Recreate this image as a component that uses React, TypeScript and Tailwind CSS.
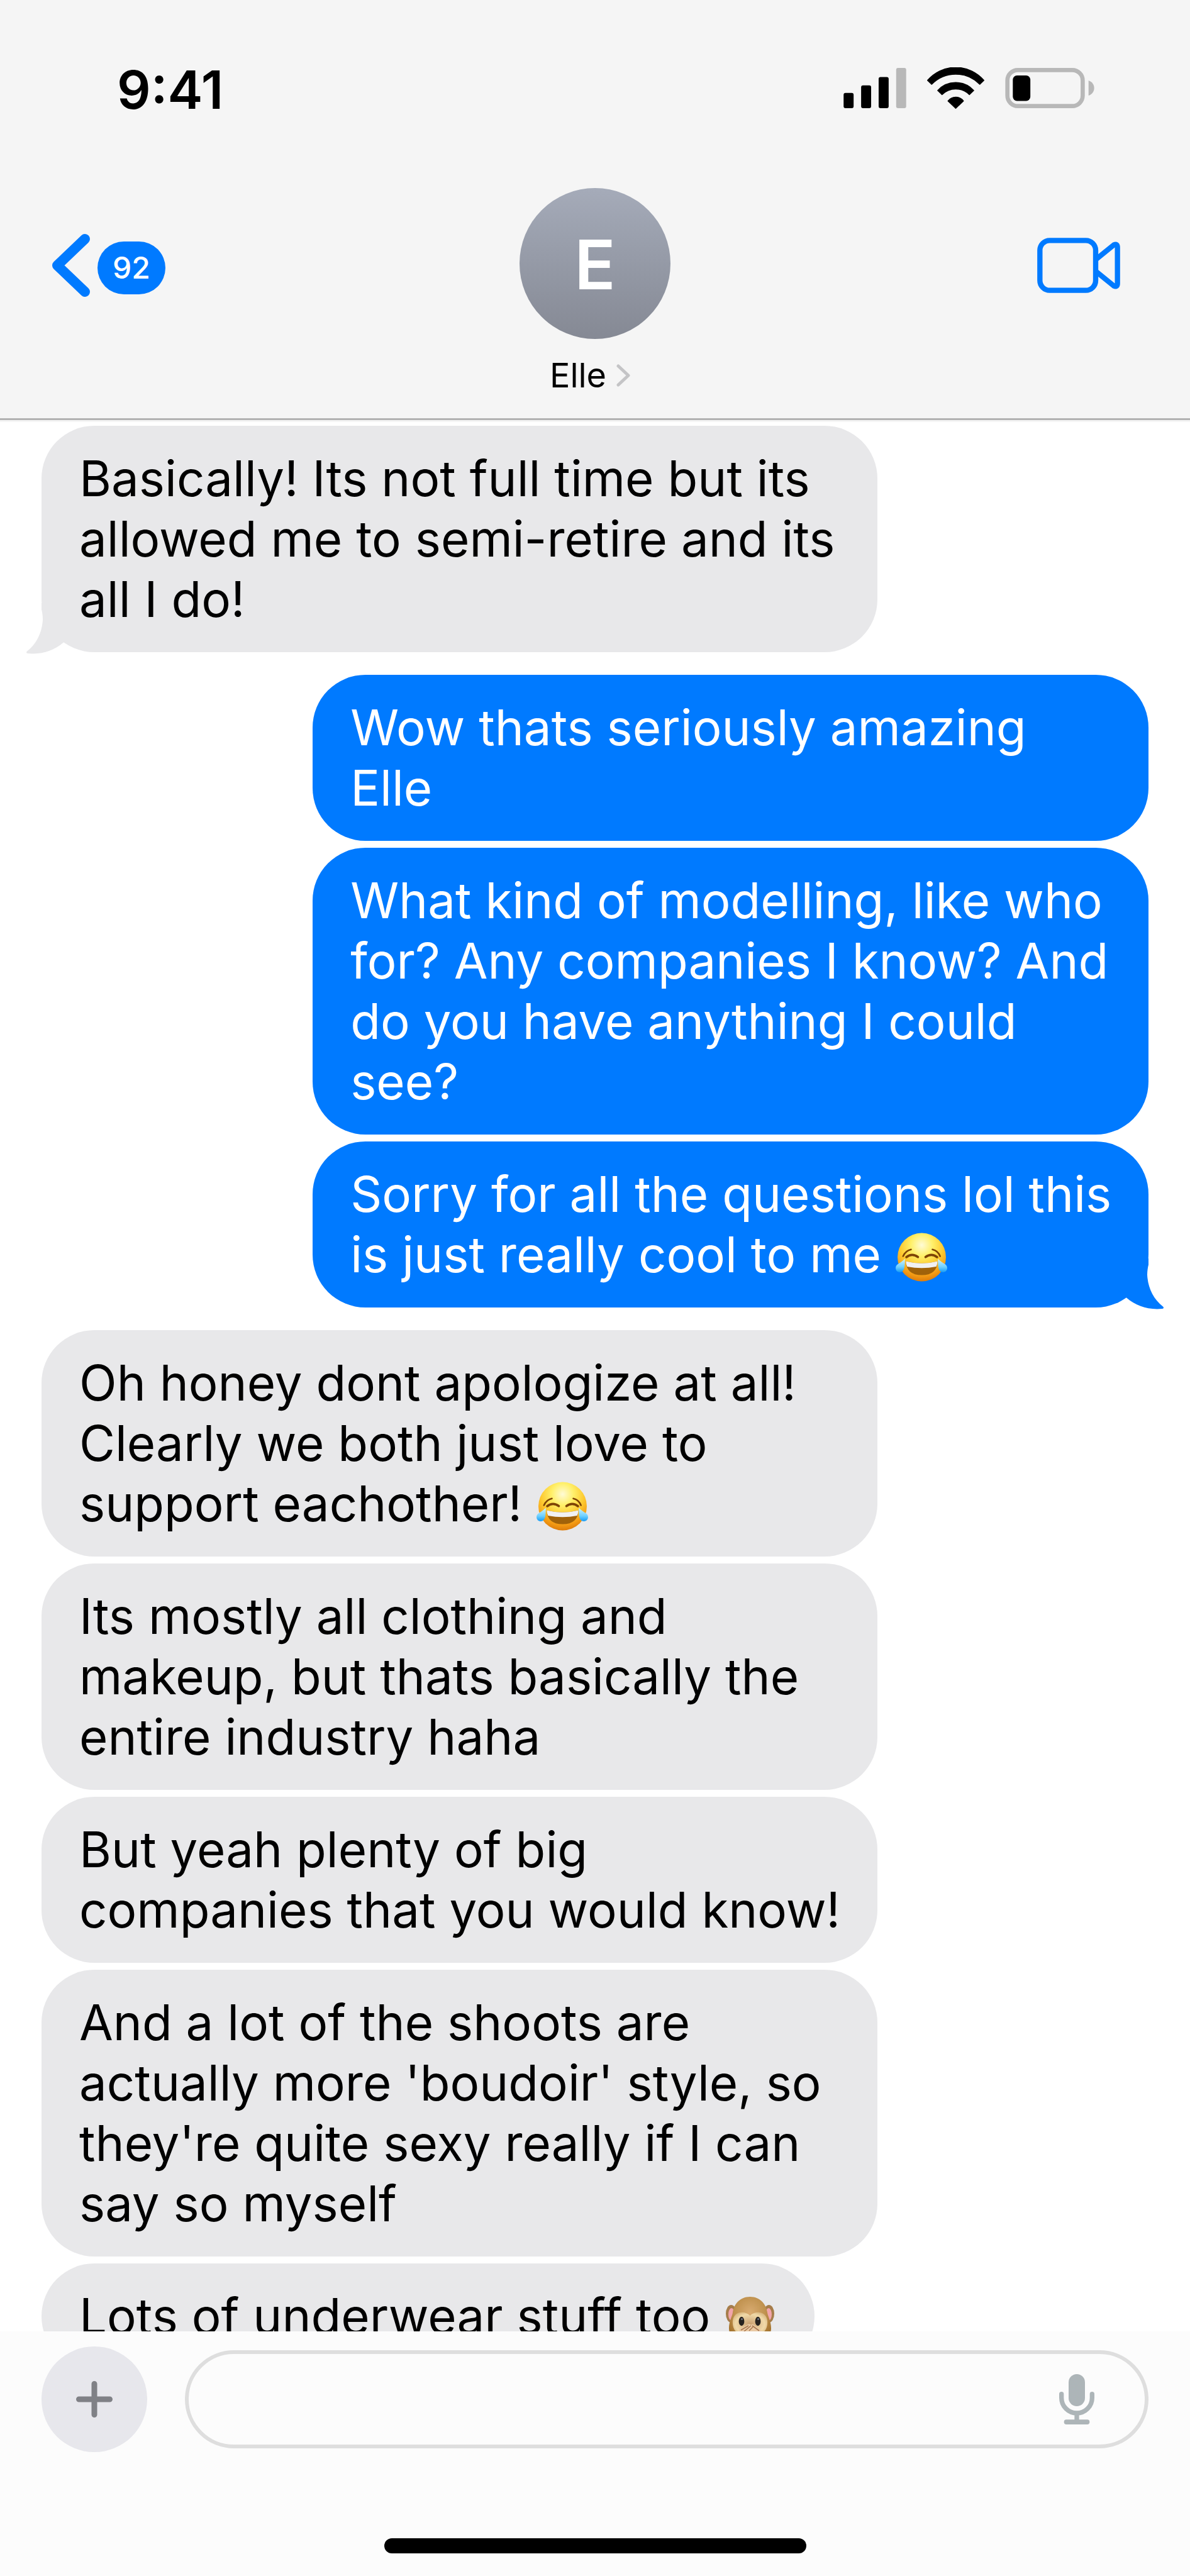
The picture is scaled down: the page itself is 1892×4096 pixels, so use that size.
import { useState } from "react";
import clsx from "clsx";

type Message = {
  text: string
  emoji?: 'joy' | 'monkey'
}

type Group = {
  mine: boolean
  tail: boolean
  messages: Message[]
}

const groups: Group[] = [
  {
    mine: false,
    tail: true,
    messages: [{ text: 'Basically! Its not full time but its allowed me to semi-retire and its all I do!' }]
  },
  {
    mine: true,
    tail: true,
    messages: [
      { text: 'Wow thats seriously amazing Elle' },
      { text: 'What kind of modelling, like who for? Any companies I know? And do you have anything I could see?' },
      { text: 'Sorry for all the questions lol this is just really cool to me', emoji: 'joy' }
    ]
  },
  {
    mine: false,
    tail: false,
    messages: [
      { text: 'Oh honey dont apologize at all! Clearly we both just love to support eachother!', emoji: 'joy' },
      { text: 'Its mostly all clothing and makeup, but thats basically the entire industry haha' },
      { text: 'But yeah plenty of big companies that you would know!' },
      { text: "And a lot of the shoots are actually more 'boudoir' style, so they're quite sexy really if I can say so myself" },
      { text: 'Lots of underwear stuff too', emoji: 'monkey' }
    ]
  }
]

const SignalIcon = () => (
  <svg className="h-16 w-[100px]" viewBox="0 0 300 193" aria-hidden="true">
    <rect x="0" y="120" width="48" height="73" rx="9" />
    <rect x="84" y="84" width="48" height="109" rx="9" />
    <rect x="168" y="44" width="48" height="149" rx="9" />
    <rect x="252" y="0" width="48" height="193" rx="9" fill="#b8b8b8" />
  </svg>
)

const WifiIcon = () => (
  <svg className="h-[66px] w-[91px]" viewBox="0 0 272 197" stroke="#000" strokeWidth="4" strokeLinejoin="round" aria-hidden="true">
    <path d="M2 62 A176 176 0 0 1 270 62 L250 81 A159 159 0 0 0 22 81 Z" />
    <path d="M50 110 A117 117 0 0 1 222 110 L201 130 A92 92 0 0 0 71 130 Z" />
    <path d="M99 160 A46 46 0 0 1 173 160 L136 195 Z" />
  </svg>
)

const BatteryIcon = () => (
  <svg className="h-16 w-[142px]" viewBox="0 0 426 193" aria-hidden="true">
    <rect x="10" y="10" width="361" height="173" rx="50" fill="none" stroke="#b8b8b8" strokeWidth="20" />
    <rect x="36" y="36" width="84" height="122" rx="20" />
    <path d="M399 60 C435 72 435 121 399 133 Z" fill="#b8b8b8" />
  </svg>
)

const BackIcon = () => (
  <svg className="h-[100px] w-[60px]" viewBox="0 0 60 100" fill="none" stroke="#007aff" strokeWidth="16" strokeLinecap="round" strokeLinejoin="round" aria-hidden="true">
    <path d="M52 8 L8 50 L52 92" />
  </svg>
)

const VideoIcon = () => (
  <svg className="h-[88px] w-[132px]" viewBox="0 0 396 264" fill="none" stroke="#007aff" strokeWidth="25" aria-hidden="true">
    <rect x="13" y="13" width="266" height="238" rx="47" />
    <path d="M283 101 L366 34 Q383 27 383 46 V218 Q383 237 366 230 L283 163" />
  </svg>
)

const MicIcon = () => (
  <svg className="h-20 w-14" viewBox="0 0 168 240" fill="#adb5b8" aria-hidden="true">
    <rect x="45" y="0" width="78" height="153" rx="39" />
    <path d="M11 95 V113 A73 73 0 0 0 157 113 V95" fill="none" stroke="#adb5b8" strokeWidth="22" strokeLinecap="round" />
    <rect x="73" y="186" width="22" height="40" />
    <rect x="23" y="217" width="122" height="23" rx="11" />
  </svg>
)

const JoyEmoji = () => (
  <svg className="mr-3 inline-block h-[78px] w-[84px] align-[-15px]" viewBox="0 0 84 78" role="img" aria-label="😂">
    <defs>
      <radialGradient id="joyFace" cx="0.5" cy="0.25" r="0.75">
        <stop offset="0" stopColor="#fffbd6" />
        <stop offset="0.3" stopColor="#fff06a" />
        <stop offset="0.6" stopColor="#fdc92f" />
        <stop offset="0.85" stopColor="#f39a14" />
        <stop offset="1" stopColor="#dd7c0c" />
      </radialGradient>
      <linearGradient id="joyTear" x1="0" y1="0" x2="0" y2="1">
        <stop offset="0" stopColor="#d3f4ff" />
        <stop offset="0.6" stopColor="#6fd0ff" />
        <stop offset="1" stopColor="#169cf5" />
      </linearGradient>
    </defs>
    <circle cx="42.5" cy="39" r="38.5" fill="url(#joyFace)" />
    <g fill="none" stroke="#7d4305" strokeLinecap="round">
      <path d="M12.8 37.5 Q17 28.5 25.5 26.8" strokeWidth="2.6" />
      <path d="M59.5 26.8 Q68 28.5 71.7 37.5" strokeWidth="2.6" />
      <path d="M18 39 Q27 32 36.5 38.8 M48.5 38.8 Q58 32 67 39" strokeWidth="3.6" />
    </g>
    <path d="M17.3 45.5 Q42.5 52 67.6 45.5 Q67 67.5 42.5 67.5 Q18 67.5 17.3 45.5 Z" fill="#a0620a" />
    <path d="M17.3 45.5 Q42.5 52 67.6 45.5 Q67.5 50.5 65.6 54 Q42.5 58.5 19.3 54 Q17.5 50.5 17.3 45.5 Z" fill="#f1f1f3" />
    <path d="M15.7 41.5 C15.5 50 16.5 63 7.5 63 C0.5 63 -1 54 4 50.5 C8 47.5 12 45.5 15.7 41.5 Z" fill="url(#joyTear)" />
    <path d="M68.3 41.5 C68.5 50 67.5 63 76.5 63 C83.5 63 85 54 80 50.5 C76 47.5 72 45.5 68.3 41.5 Z" fill="url(#joyTear)" />
  </svg>
)

const MonkeyEmoji = () => (
  <svg className="mr-3 inline-block h-[78px] w-[84px] align-[-15px]" viewBox="0 0 84 78" role="img" aria-label="🙊">
    <defs>
      <radialGradient id="monkeyHead" cx="0.5" cy="0.35" r="0.6">
        <stop offset="0" stopColor="#d9ac72" />
        <stop offset="0.6" stopColor="#c0924f" />
        <stop offset="1" stopColor="#a4742f" />
      </radialGradient>
      <radialGradient id="monkeyMask" cx="0.5" cy="0.5" r="0.6">
        <stop offset="0" stopColor="#c99f70" />
        <stop offset="0.7" stopColor="#f0d9a8" />
        <stop offset="1" stopColor="#d4b078" />
      </radialGradient>
    </defs>
    <ellipse cx="11.5" cy="31" rx="8.5" ry="14" fill="#a67d4b" />
    <ellipse cx="71.5" cy="31" rx="8.5" ry="14" fill="#a67d4b" />
    <ellipse cx="12" cy="32" rx="5" ry="10" fill="#f2a5ab" />
    <ellipse cx="71" cy="32" rx="5" ry="10" fill="#f2a5ab" />
    <path d="M41.5 4 C57 4 67 15 69 29 C70 36 75 43 75 54 C75 70 60 78 41.5 78 C23 78 8 70 8 54 C8 43 13 36 14 29 C16 15 26 4 41.5 4 Z" fill="url(#monkeyHead)" />
    <path d="M41.5 34 C49 26 67 26 69 42 C70 56 64 66 41.5 66 C19 66 13 56 14 42 C16 26 34 26 41.5 34 Z" fill="url(#monkeyMask)" />
    <ellipse cx="28" cy="43" rx="4.4" ry="7.2" fill="#26221f" />
    <ellipse cx="54" cy="43" rx="4.4" ry="7.2" fill="#26221f" />
    <circle cx="28.5" cy="39.5" r="1.6" fill="#6f7682" />
    <circle cx="54.5" cy="39.5" r="1.6" fill="#6f7682" />
    <path d="M24 56 L38 48 Q41 46 43 49 Q46 46 49 50 L60 58 V78 H24 Z" fill="#e9c9a4" />
    <path d="M27 57 L39 50 M32 59 L43 50 M45 50 L56 58 M40 58 L46 52" stroke="#a87850" strokeWidth="1.6" fill="none" />
  </svg>
)

const Tail = ({ mine }: { mine: boolean }) => (
  <svg
    className={clsx('absolute -bottom-1 h-[82px] w-[75px]', mine ? '-right-[25px] -scale-x-100' : '-left-[25px]')}
    viewBox="0 0 75 82"
    fill={mine ? '#007aff' : '#e8e8ea'}
    aria-hidden="true"
  >
    <path d="M25 0 V10 C26 14 27 20 27 26 C26 46 18 64 1.5 77 Q0 79.5 3 80 C26 82 44 76 60 62.5 L75 50 V0 Z" />
  </svg>
)

const Bubble = ({ message, mine, tail }: { message: Message, mine: boolean, tail: boolean }) => (
  <li
    className={clsx(
      'relative max-w-[75.5%] rounded-[84px] py-9 pr-12 pl-[60px]',
      mine ? 'self-end bg-[#007aff] text-white' : 'self-start bg-[#e8e8ea] text-black'
    )}
  >
    {tail && <Tail mine={mine} />}
    <p className="relative">
      {message.text}
      {message.emoji && ' '}
      {message.emoji === 'joy' && <JoyEmoji />}
      {message.emoji === 'monkey' && <MonkeyEmoji />}
    </p>
  </li>
)

const Header = () => (
  <header className="relative z-10 shrink-0 border-b-[3px] border-[#b2b2b2] bg-[#f5f5f5] pt-[101px] pb-8 shadow-[0_3px_0_#f5f5f5]">
    <div className="flex items-center justify-between pr-[152px] pl-[186px]">
      <span className="text-[84px] leading-[84px] font-semibold">9:41</span>
      <div className="flex items-center gap-[33px] pb-1.5">
        <SignalIcon />
        <WifiIcon />
        <BatteryIcon />
      </div>
    </div>
    <nav className="mt-[114px] grid grid-cols-3 items-start">
      <button className="ml-[83px] flex h-[246px] items-center gap-3 justify-self-start" aria-label="Back, 92 unread">
        <BackIcon />
        <span className="mt-2 flex h-[84px] w-[108px] items-center justify-center rounded-full bg-[#007aff] text-[48px] leading-[60px] font-medium text-white">92</span>
      </button>
      <button className="flex flex-col items-center justify-self-center">
        <span className="flex size-60 items-center justify-center rounded-full bg-linear-to-b from-[#a5abb9] to-[#858994] pt-1 text-[108px] leading-[120px] font-semibold text-white">E</span>
        <span className="mt-[22px] flex items-center gap-4 pr-4 text-[54px] leading-[72px]">
          Elle
          <svg className="h-9 w-[22px]" viewBox="0 0 22 36" fill="none" stroke="#c4c4c6" strokeWidth="5" strokeLinecap="round" strokeLinejoin="round" aria-hidden="true">
            <path d="M3 3 L19 18 L3 33" />
          </svg>
        </span>
      </button>
      <button className="mr-[111px] flex h-[246px] items-center justify-self-end" aria-label="Video call">
        <VideoIcon />
      </button>
    </nav>
  </header>
)

const Composer = () => {
  const [draft, setDraft] = useState('')

  return (
    <footer className="shrink-0 bg-[#fcfcfc] pt-6 pb-9">
      <div className="flex items-center gap-[60px] px-[66px]">
        <button className="flex size-[168px] shrink-0 items-center justify-center rounded-full bg-[#e7e7ec]" aria-label="Add attachment">
          <svg className="size-[58px]" viewBox="0 0 58 58" stroke="#808186" strokeWidth="9" strokeLinecap="round" aria-hidden="true">
            <path d="M29 4.5 V53.5 M4.5 29 H53.5" />
          </svg>
        </button>
        <div className="flex h-[156px] flex-1 items-center rounded-full border-6 border-[#dedede] pr-20 pl-[60px]">
          <input
            className="min-w-0 flex-1 bg-transparent outline-none"
            aria-label="Message"
            value={draft}
            onChange={(e) => setDraft(e.target.value)}
          />
          <button aria-label="Dictate">
            <MicIcon />
          </button>
        </div>
      </div>
      <div className="mx-auto mt-[137px] h-6 w-[671px] rounded-full bg-black" />
    </footer>
  )
}

export default function App() {
  return (
    <div className="flex h-screen flex-col overflow-hidden bg-white font-['Inter',sans-serif] text-[78px] leading-[96px] text-black">
      <Header />
      <main className="flex min-h-0 flex-1 flex-col gap-9 overflow-hidden px-[66px] pt-[9px]">
        {groups.map((group, i) => (
          <ul key={i} className="flex shrink-0 flex-col gap-[11px]">
            {group.messages.map((message, j) => (
              <Bubble
                key={j}
                message={message}
                mine={group.mine}
                tail={group.tail && j === group.messages.length - 1}
              />
            ))}
          </ul>
        ))}
      </main>
      <Composer />
    </div>
  )
}
